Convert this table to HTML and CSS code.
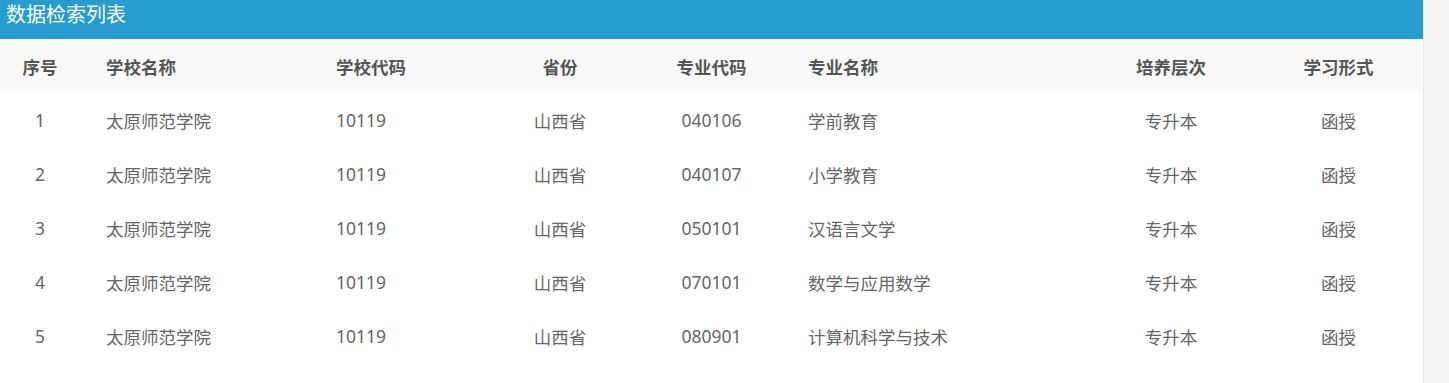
FILE: index.html
```html
<!DOCTYPE html>
<html lang="zh-CN">
<head>
<meta charset="utf-8">
<title>数据检索列表</title>
<link rel="stylesheet" href="styles.css">
</head>
<body>
<div class="page">
  <main class="panel">
    <div class="panel-title">数据检索列表</div>
    <div class="grid head">
      <div class="c">序号</div><div class="l">学校名称</div><div class="l">学校代码</div><div class="c">省份</div><div class="c">专业代码</div><div class="l">专业名称</div><div class="c">培养层次</div><div class="c">学习形式</div>
    </div>
    <div class="grid row">
      <div class="c">1</div><div class="l">太原师范学院</div><div class="l">10119</div><div class="c">山西省</div><div class="c">040106</div><div class="l">学前教育</div><div class="c">专升本</div><div class="c">函授</div>
    </div>
    <div class="grid row">
      <div class="c">2</div><div class="l">太原师范学院</div><div class="l">10119</div><div class="c">山西省</div><div class="c">040107</div><div class="l">小学教育</div><div class="c">专升本</div><div class="c">函授</div>
    </div>
    <div class="grid row">
      <div class="c">3</div><div class="l">太原师范学院</div><div class="l">10119</div><div class="c">山西省</div><div class="c">050101</div><div class="l">汉语言文学</div><div class="c">专升本</div><div class="c">函授</div>
    </div>
    <div class="grid row">
      <div class="c">4</div><div class="l">太原师范学院</div><div class="l">10119</div><div class="c">山西省</div><div class="c">070101</div><div class="l">数学与应用数学</div><div class="c">专升本</div><div class="c">函授</div>
    </div>
    <div class="grid row">
      <div class="c">5</div><div class="l">太原师范学院</div><div class="l">10119</div><div class="c">山西省</div><div class="c">080901</div><div class="l">计算机科学与技术</div><div class="c">专升本</div><div class="c">函授</div>
    </div>
  </main>
  <div class="side"></div>
</div>
</body>
</html>
```

FILE: styles.css
```css
html, body {
  margin: 0;
  padding: 0;
  background: #fff;
}
body {
  font-family: "Noto Sans", "Noto Sans CJK SC", sans-serif;
  height: 383px;
  overflow: hidden;
}
.page {
  display: flex;
  height: 383px;
}
.panel {
  width: 1423px;
  flex: none;
}
.side {
  flex: 1;
  background: #f5f5f5;
  border-left: 1px solid #e6e6e6;
}
.panel-title {
  height: 39px;
  box-sizing: border-box;
  background: #269ccf;
  color: #fff;
  font-size: 20px;
  line-height: 30px;
  padding-left: 6px;
}
.grid {
  display: grid;
  grid-template-columns: 80px 230px 170px 160px 143px 305px 166px 169px;
  height: 54px;
  align-items: center;
  font-size: 17.5px;
}
.head {
  background: #f9f9f9;
  color: #555;
  font-weight: bold;
}
.row {
  color: #666;
}
.c {
  text-align: center;
}
.l {
  text-align: left;
  padding-left: 26px;
}
.grid > div:nth-child(6) {
  padding-left: 25px;
}
```
